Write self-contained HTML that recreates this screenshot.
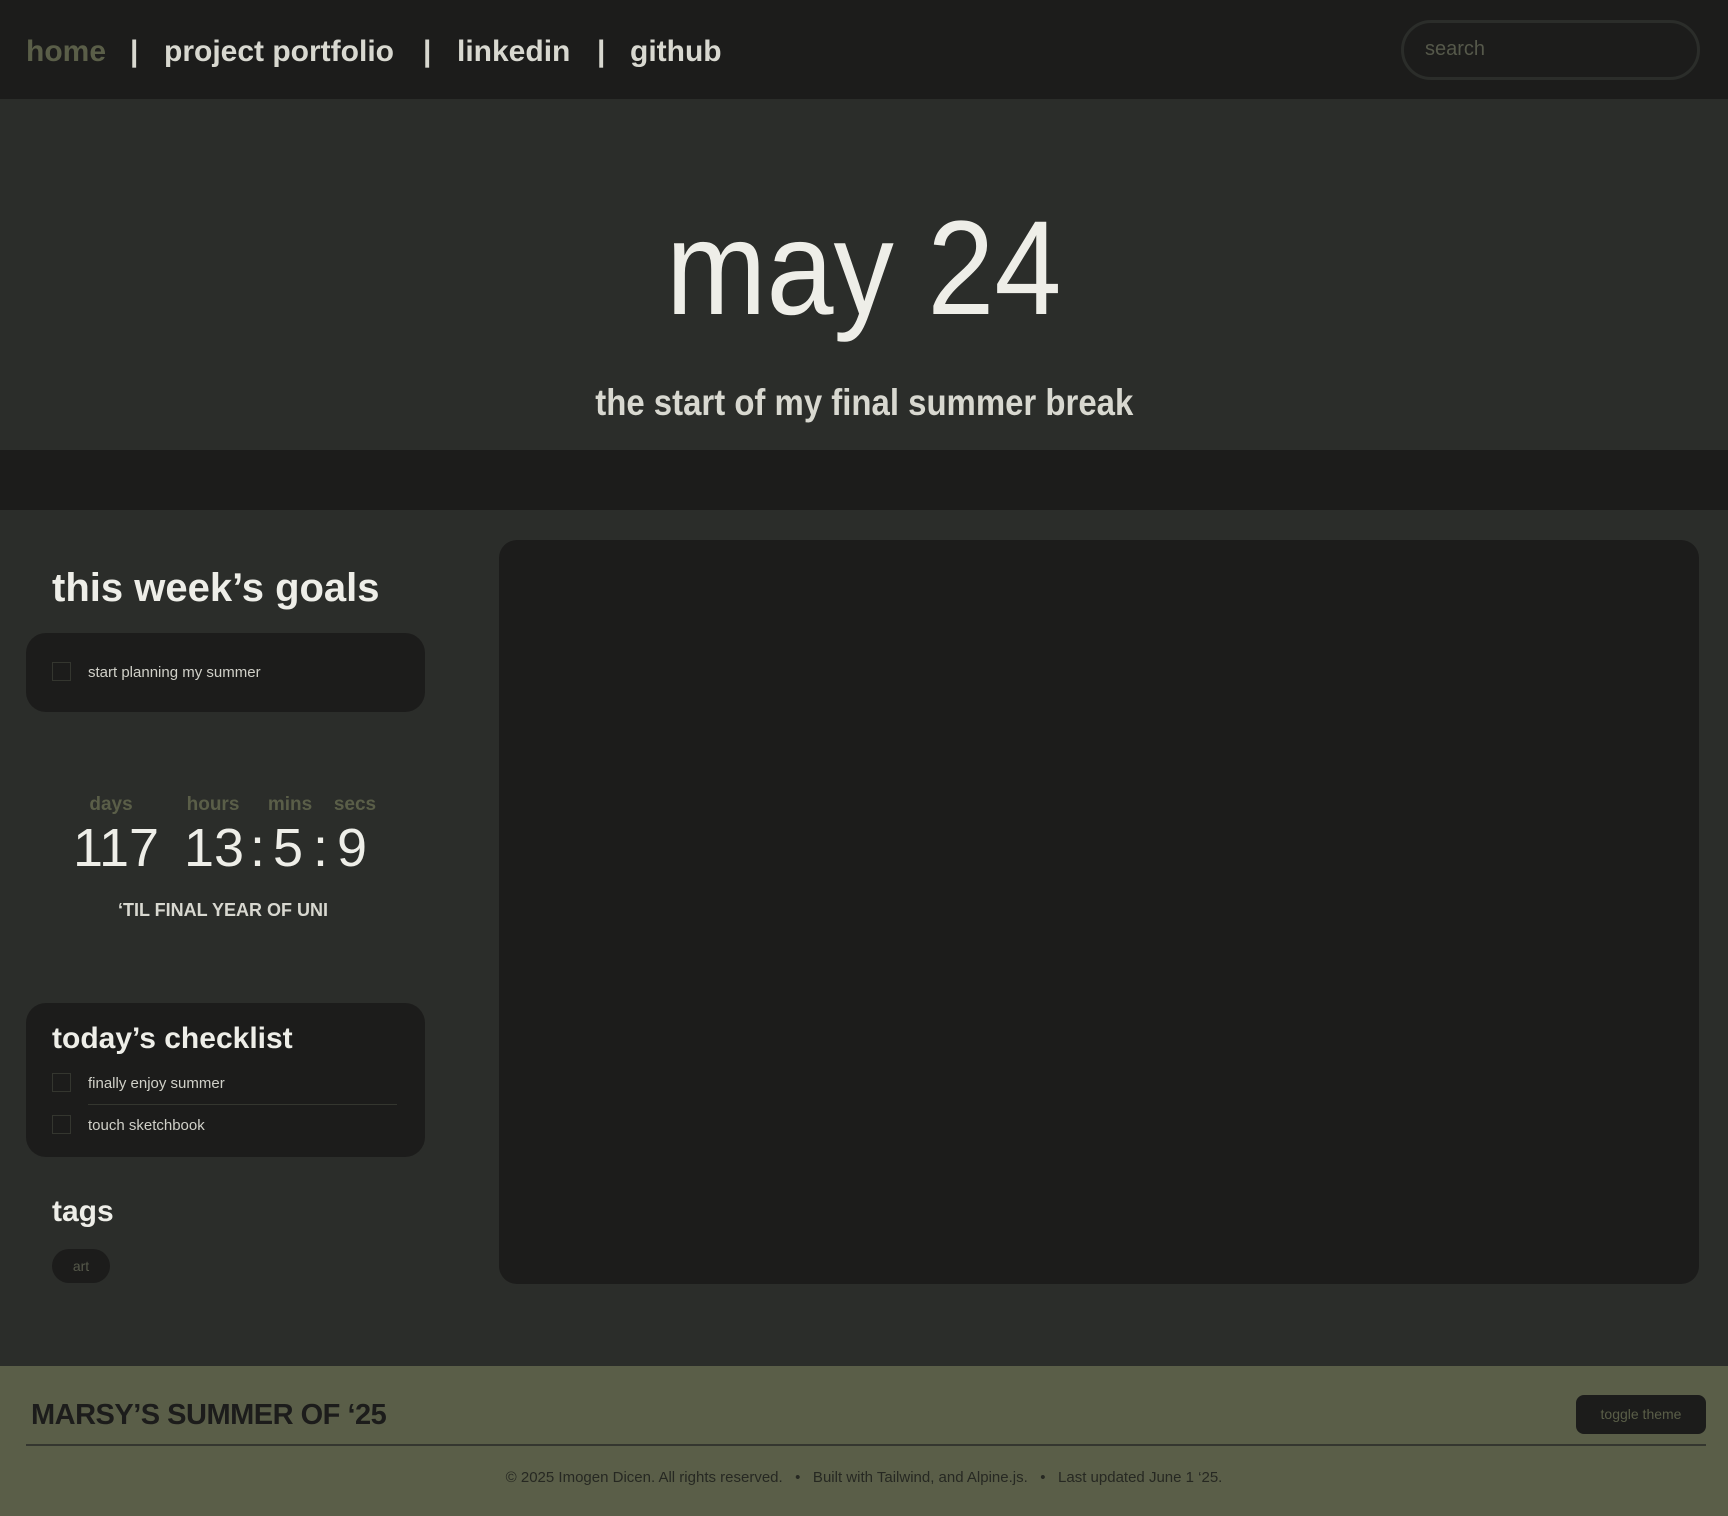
<!DOCTYPE html>
<html><head><meta charset="utf-8"><style>
*{margin:0;padding:0;box-sizing:border-box}
body{width:1728px;height:1516px;background:#2b2d2a;font-family:"Liberation Sans",sans-serif;position:relative;overflow:hidden}
.a{position:absolute;white-space:nowrap}
.nav{left:0;top:0;width:1728px;height:99px;background:#1c1c1b}
.nl{font-weight:bold;font-size:30px;color:#d8d8d0;top:34px;line-height:36px}
.cb{position:absolute;width:19px;height:19px;border:1px solid #34362f}
.it{font-size:15px;color:#d0d0c8}
.lab{font-weight:bold;font-size:19px;color:#5a5e48;top:794px;transform:translateX(-50%)}
.num{font-size:54px;color:#eeeee8;top:818px;line-height:60px}
</style></head><body>
<div class="a nav"></div>
<div class="a nl" style="left:26px;color:#5a5e48">home</div>
<div class="a nl" style="left:130px">|</div>
<div class="a nl" style="left:164px">project portfolio</div>
<div class="a nl" style="left:423px">|</div>
<div class="a nl" style="left:457px">linkedin</div>
<div class="a nl" style="left:597px">|</div>
<div class="a nl" style="left:630px">github</div>
<div class="a" style="left:1401px;top:20px;width:299px;height:60px;border:3px solid #2b2d2a;border-radius:30px"></div>
<div class="a" style="left:1425px;top:38px;font-size:20px;color:#55584a">search</div>

<div class="a" style="left:0;top:99px;width:1728px;height:351px;background:#2b2d2a"></div>
<div class="a" style="left:0;top:194px;width:1728px;text-align:center"><span style="display:inline-block;font-size:134px;line-height:150px;color:#eeeee8;transform:scaleX(0.9)">may 24</span></div>
<div class="a" style="left:0;top:381px;width:1728px;text-align:center"><span style="display:inline-block;font-size:37px;font-weight:bold;line-height:44px;color:#d8d8d0;transform:scaleX(0.89)">the start of my final summer break</span></div>
<div class="a" style="left:0;top:450px;width:1728px;height:60px;background:#1c1c1b"></div>

<div class="a" style="left:499px;top:540px;width:1200px;height:744px;background:#1c1c1b;border-radius:18px"></div>

<div class="a" style="left:52px;top:566px;font-size:40px;font-weight:bold;color:#eeeee8">this week’s goals</div>
<div class="a" style="left:26px;top:633px;width:399px;height:79px;background:#1c1c1b;border-radius:20px"></div>
<div class="cb" style="left:52px;top:662px"></div>
<div class="a it" style="left:88px;top:664px">start planning my summer</div>

<div class="a lab" style="left:111px">days</div>
<div class="a lab" style="left:213px">hours</div>
<div class="a lab" style="left:290px">mins</div>
<div class="a lab" style="left:355px">secs</div>
<div class="a num" style="left:73px">117</div>
<div class="a num" style="left:184px">13</div>
<div class="a num" style="left:250px">:</div>
<div class="a num" style="left:273px">5</div>
<div class="a num" style="left:313px">:</div>
<div class="a num" style="left:337px">9</div>
<div class="a" style="left:118px;top:900px;font-size:18px;font-weight:bold;color:#d8d8d0">‘TIL FINAL YEAR OF UNI</div>

<div class="a" style="left:26px;top:1003px;width:399px;height:154px;background:#1c1c1b;border-radius:20px"></div>
<div class="a" style="left:52px;top:1022px;font-size:30px;font-weight:bold;color:#eeeee8">today’s checklist</div>
<div class="cb" style="left:52px;top:1073px"></div>
<div class="a it" style="left:88px;top:1075px">finally enjoy summer</div>
<div class="a" style="left:88px;top:1104px;width:309px;height:1px;background:#34362f"></div>
<div class="cb" style="left:52px;top:1115px"></div>
<div class="a it" style="left:88px;top:1117px">touch sketchbook</div>

<div class="a" style="left:52px;top:1195px;font-size:30px;font-weight:bold;color:#eeeee8">tags</div>
<div class="a" style="left:52px;top:1249px;width:58px;height:34px;background:#1c1c1b;border-radius:17px;text-align:center;line-height:34px;font-size:14px;color:#55584a">art</div>

<div class="a" style="left:0;top:1366px;width:1728px;height:150px;background:#5a5e48"></div>
<div class="a" style="left:31px;top:1399px;font-size:29px;font-weight:bold;color:#1c1c1b;letter-spacing:-0.5px">MARSY’S SUMMER OF ‘25</div>
<div class="a" style="left:1576px;top:1395px;width:130px;height:39px;background:#1c1c1b;border-radius:8px;text-align:center;line-height:39px;font-size:14px;color:#5a5e48">toggle theme</div>
<div class="a" style="left:26px;top:1444px;width:1680px;height:2px;background:#34362f"></div>
<div class="a" style="left:0;top:1469px;width:1728px;text-align:center;font-size:15px;color:#262822">© 2025 Imogen Dicen. All rights reserved. &nbsp; • &nbsp; Built with Tailwind, and Alpine.js. &nbsp; • &nbsp; Last updated June 1 ‘25.</div>
</body></html>
